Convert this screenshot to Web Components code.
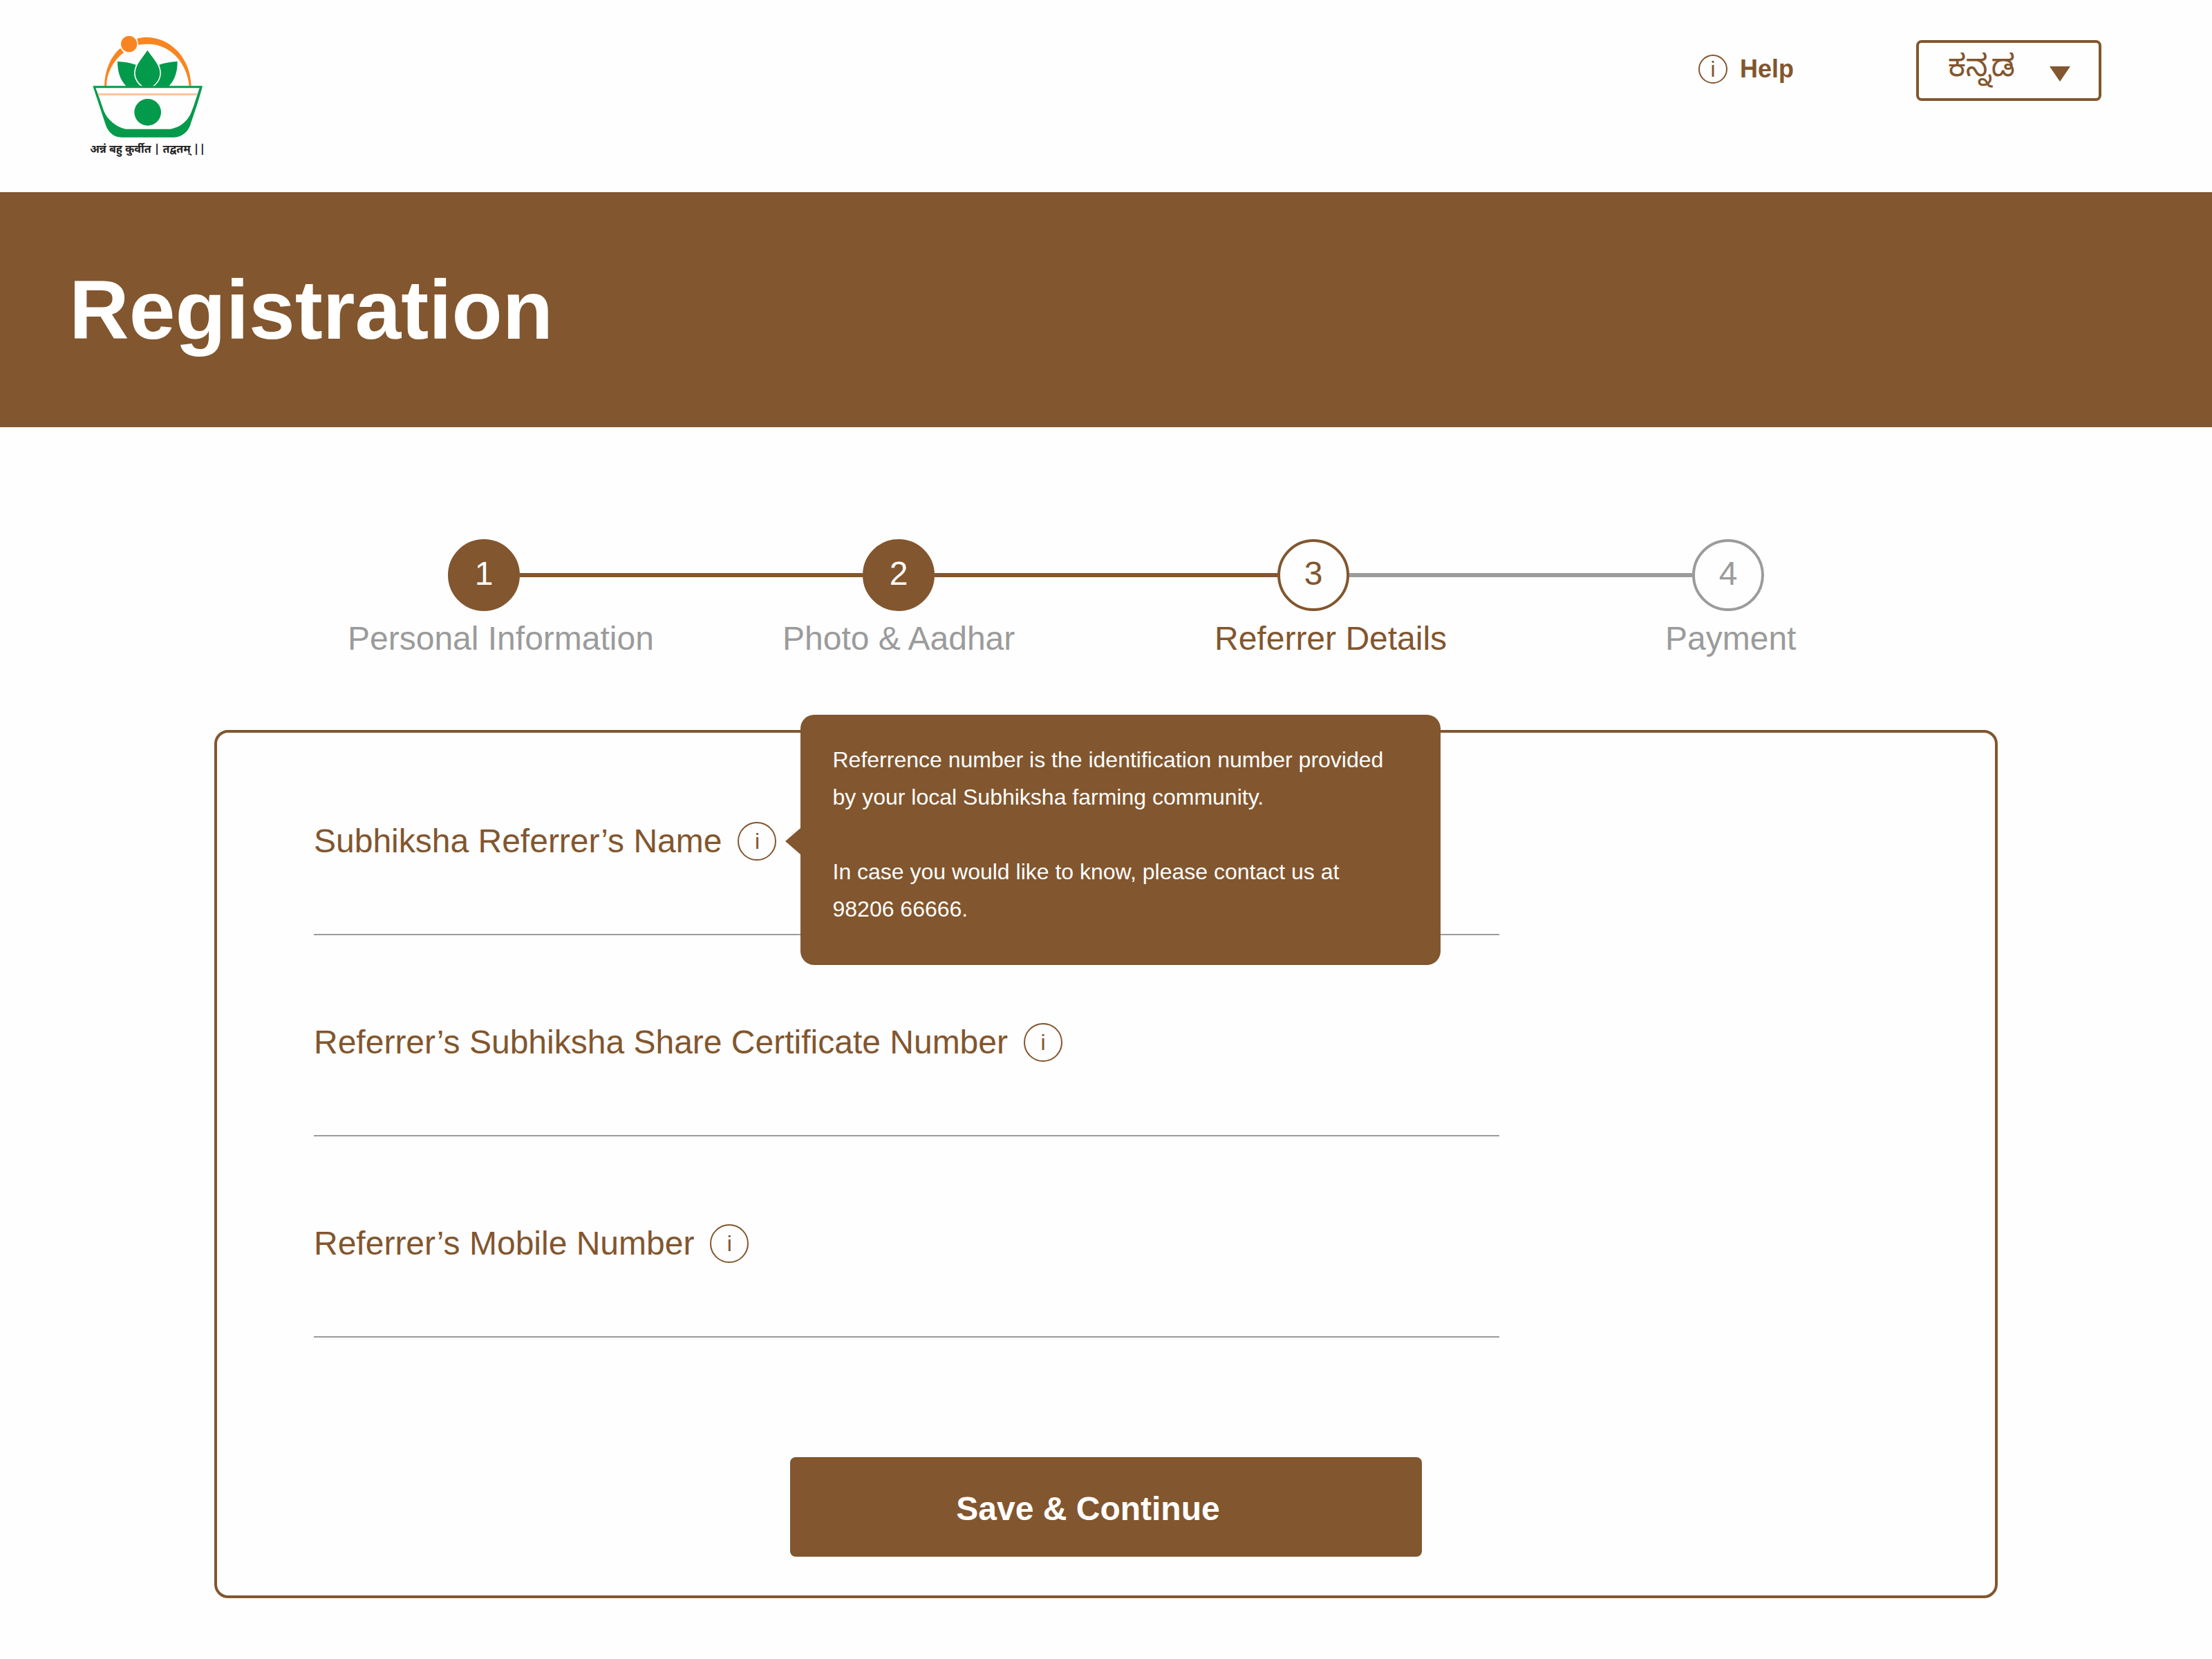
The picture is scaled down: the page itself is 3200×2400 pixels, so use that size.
<!DOCTYPE html>
<html lang="en">
<head>
<meta charset="utf-8">
<title>Registration</title>
<style>
  :root {
    --brand: #82562e;
    --muted: #9b9b9b;
    --ground: #fefefe;
  }
  body {
    margin: 0;
    background: var(--ground);
    color: var(--brand);
    font-family: "Liberation Sans", "Noto Sans", sans-serif;
    font-size: 48px;
    line-height: 56px;
  }
</style>
</head>
<body>
<registration-page></registration-page>

<template id="t-page">
  <style>
    :host { display: block; }
    main { display: block; padding: 162px 310px 88px; }
    form-card { margin-top: 104px; }
  </style>
  <site-header></site-header>
  <page-banner>Registration</page-banner>
  <main>
    <step-track>
      <step-dot slot="dots" state="done">1</step-dot>
      <step-line slot="dots" state="done"></step-line>
      <step-dot slot="dots" state="done">2</step-dot>
      <step-line slot="dots" state="done"></step-line>
      <step-dot slot="dots" state="current">3</step-dot>
      <step-line slot="dots"></step-line>
      <step-dot slot="dots">4</step-dot>
      <step-label slot="labels">Personal Information</step-label>
      <step-label slot="labels">Photo &amp; Aadhar</step-label>
      <step-label slot="labels" state="current">Referrer Details</step-label>
      <step-label slot="labels">Payment</step-label>
    </step-track>
    <form-card>
      <text-field label="Subhiksha Referrer’s Name" name="referrer">
        <info-tip slot="tip">
          <p>Referrence number is the identification number provided by your local Subhiksha farming community.</p>
          <p>In case you would like to know, please contact us at 98206&nbsp;66666.</p>
        </info-tip>
      </text-field>
      <text-field label="Referrer’s Subhiksha Share Certificate Number" name="certificate"></text-field>
      <text-field label="Referrer’s Mobile Number" name="mobile" type="tel"></text-field>
      <primary-button slot="action">Save &amp; Continue</primary-button>
    </form-card>
  </main>
</template>

<template id="t-header">
  <style>
    :host { display: block; }
    header { display: flex; justify-content: space-between; align-items: flex-start; height: 278px; padding: 30px 160px 0 100px; box-sizing: border-box; }
    nav { display: flex; align-items: center; gap: 177px; padding-top: 28px; }
    a { display: flex; align-items: center; gap: 18px; padding-bottom: 4px; color: inherit; font-size: 36px; line-height: 42px; font-weight: 700; text-decoration: none; }
  </style>
  <header>
    <brand-logo></brand-logo>
    <nav>
      <a href="#help"><info-glyph style="--size: 42px"></info-glyph>Help</a>
      <language-select></language-select>
    </nav>
  </header>
</template>

<template id="t-logo">
  <style>
    :host { display: block; }
    svg { display: block; width: 240px; height: 220px; }
    text { font-family: "Noto Sans Devanagari", "Noto Sans", sans-serif; font-size: 48px; font-weight: 700; fill: #222; }
  </style>
  <svg viewBox="0 0 720 660" role="img" aria-label="Subhiksha">
    <g fill="#f98521">
      <path d="M153 284C154 215 180 155 222 119L237 137C190 175 163 225 162 284Z"/>
      <path d="M295 77C400 50 525 130 530 284H521C512 180 430 80 301 105Z"/>
      <circle cx="260" cy="101" r="35"/>
    </g>
    <g fill="#039a4b">
      <path d="M210 177Q250 178 290 191C275 230 282 260 312 284H248C220 255 210 220 210 177Z"/>
      <path d="M470 177Q430 178 391 191C405 230 398 260 368 284H433C460 255 470 220 470 177Z"/>
      <path d="M340 125C362 158 396 190 396 228C396 255 382 272 363 286H318C300 272 285 255 285 228C285 190 318 158 340 125Z" stroke="#fefefe" stroke-width="4"/>
      <path fill-rule="evenodd" d="M103 283H579C565 340 540 410 525 455C513 485 485 506 455 506H228C190 506 168 480 158 450C140 395 120 335 103 283ZM115 292C128 325 140 360 150 390C165 430 205 462 245 470H440C485 462 520 430 532 392C545 360 555 325 566 292Z"/>
      <circle cx="341" cy="397" r="58"/>
    </g>
    <path d="M124 315H558L555 324H127Z" fill="#fbc4a3"/>
    <text x="341" y="574" text-anchor="middle">अन्नं बहु कुर्वीत | तद्वतम् ||</text>
  </svg>
</template>

<template id="t-language">
  <style>
    :host { display: block; position: relative; }
    select { display: block; width: 268px; height: 88px; padding: 4px 84px 0 42px; border: 4px solid var(--brand); border-radius: 8px; box-sizing: border-box; appearance: none; background: none; color: var(--brand); font-family: "Noto Sans Kannada", "Liberation Sans", "Noto Sans", sans-serif; font-size: 45px; line-height: 56px; }
    svg { position: absolute; right: 45px; top: 38px; width: 30px; height: 22px; fill: var(--brand); pointer-events: none; }
  </style>
  <select aria-label="Language"><option lang="kn">ಕನ್ನಡ</option></select>
  <svg viewBox="0 0 30 22" aria-hidden="true"><path d="M0 0H30L15 22Z"/></svg>
</template>

<template id="t-glyph">
  <style>
    :host { display: flex; align-items: center; justify-content: center; flex: none; width: var(--size, 56px); height: var(--size, 56px); border: 2px solid var(--brand); border-radius: 50%; box-sizing: border-box; color: var(--brand); font-size: 32px; line-height: 36px; font-weight: 400; }
  </style>
  <span>i</span>
</template>

<template id="t-banner">
  <style>
    :host { display: block; padding: 100px; background: var(--brand); color: #fff; }
    h1 { margin: 0; font-size: 120px; line-height: 140px; font-weight: 700; }
  </style>
  <h1><slot></slot></h1>
</template>

<template id="t-track">
  <style>
    :host { display: block; }
    .dots { display: flex; align-items: center; padding: 0 338px; }
    .labels { display: grid; grid-template-columns: 629fr 625fr 652fr 481fr; padding-left: 193px; margin-top: 12px; }
  </style>
  <div class="dots"><slot name="dots"></slot></div>
  <div class="labels"><slot name="labels"></slot></div>
</template>

<template id="t-dot">
  <style>
    :host { display: flex; align-items: center; justify-content: center; flex: none; width: 104px; height: 104px; padding-bottom: 4px; border: 4px solid var(--muted); border-radius: 50%; box-sizing: border-box; color: var(--muted); }
    :host([state]) { border-color: var(--brand); color: var(--brand); }
    :host([state="done"]) { background: var(--brand); color: #fff; }
  </style>
  <slot></slot>
</template>

<template id="t-line">
  <style>
    :host { display: block; flex: 1; height: 6px; background: var(--muted); }
    :host([state]) { background: var(--brand); }
  </style>
</template>

<template id="t-label">
  <style>
    :host { display: block; color: var(--muted); white-space: nowrap; }
    :host([state]) { color: var(--brand); }
  </style>
  <slot></slot>
</template>

<template id="t-card">
  <style>
    :host { display: block; }
    form { display: flex; flex-direction: column; align-items: center; gap: 173px; padding: 129px 0 56px; border: 4px solid var(--brand); border-radius: 20px; }
    .fields { display: flex; flex-direction: column; gap: 127px; align-self: flex-start; width: calc(100% * 2 / 3); margin-left: 140px; }
  </style>
  <form>
    <div class="fields"><slot></slot></div>
    <slot name="action"></slot>
  </form>
</template>

<template id="t-field">
  <style>
    :host { display: block; }
    .head { display: flex; align-items: center; gap: 23px; }
    .anchor { position: relative; }
    button { display: block; padding: 0; border: 0; background: none; font: inherit; cursor: pointer; }
    input { display: block; width: 100%; height: 108px; padding: 0; border: 0; border-bottom: 2px solid var(--muted); box-sizing: border-box; background: none; color: inherit; font: inherit; outline: none; }
  </style>
  <div class="head">
    <label for="box"></label>
    <div class="anchor">
      <button type="button" aria-label="More information"><info-glyph></info-glyph></button>
      <slot name="tip"></slot>
    </div>
  </div>
  <input id="box" type="text">
</template>

<template id="t-tip">
  <style>
    :host { display: block; position: absolute; z-index: 1; left: 91px; top: -155px; width: 926px; padding: 38px 46px 54px; border-radius: 20px; box-sizing: border-box; background: var(--brand); color: #fff; font-size: 32px; line-height: 54px; }
    :host::before { content: ""; position: absolute; right: 100%; top: 164px; border: 19px solid transparent; border-left: 0; border-right: 22px solid var(--brand); }
    ::slotted(p) { margin: 0 0 54px; }
    ::slotted(p:last-child) { margin: 0; }
  </style>
  <slot></slot>
</template>

<template id="t-button">
  <style>
    :host { display: block; }
    button { display: block; width: 914px; height: 144px; padding: 6px 52px 0 0; border: 0; border-radius: 8px; background: var(--brand); color: #fff; font: inherit; font-weight: 700; cursor: pointer; }
  </style>
  <button type="submit"><slot></slot></button>
</template>

<script>
  class TemplateElement extends HTMLElement {
    constructor() {
      super();
      const template = document.getElementById(this.constructor.template);
      this.attachShadow({ mode: "open" }).append(template.content.cloneNode(true));
    }
  }

  class TextField extends TemplateElement {
    static template = "t-field";
    connectedCallback() {
      const input = this.shadowRoot.querySelector("input");
      this.shadowRoot.querySelector("label").textContent = this.getAttribute("label");
      input.name = this.getAttribute("name");
      input.type = this.getAttribute("type") || "text";
    }
  }

  const define = (name, template) =>
    customElements.define(name, class extends TemplateElement { static template = template; });

  define("info-glyph", "t-glyph");
  define("brand-logo", "t-logo");
  define("language-select", "t-language");
  define("site-header", "t-header");
  define("page-banner", "t-banner");
  define("step-dot", "t-dot");
  define("step-line", "t-line");
  define("step-label", "t-label");
  define("step-track", "t-track");
  define("info-tip", "t-tip");
  customElements.define("text-field", TextField);
  define("primary-button", "t-button");
  define("form-card", "t-card");
  define("registration-page", "t-page");
</script>
</body>
</html>
